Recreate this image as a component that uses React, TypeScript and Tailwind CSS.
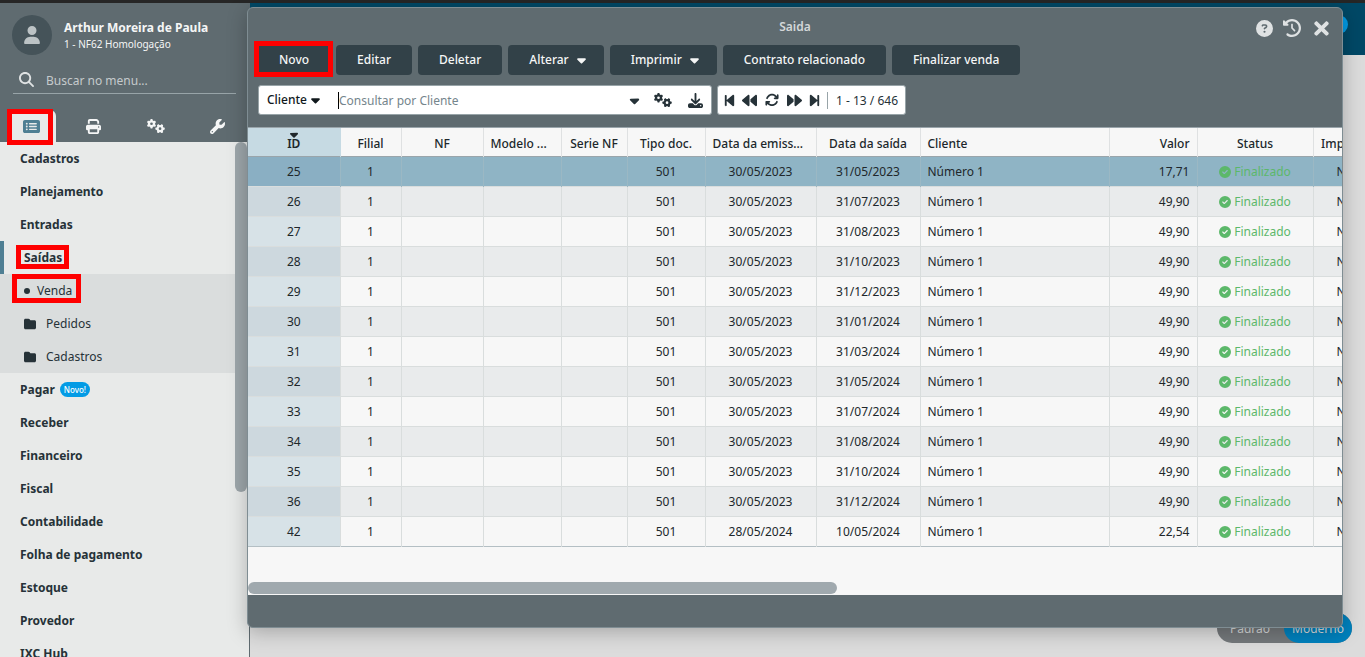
import React from "react";
import {
  FaArrowsRotate,
  FaBackward,
  FaBackwardStep,
  FaCaretDown,
  FaCircleCheck,
  FaCircleQuestion,
  FaClockRotateLeft,
  FaDownload,
  FaFolder,
  FaForward,
  FaForwardStep,
  FaGears,
  FaMagnifyingGlass,
  FaPrint,
  FaRectangleList,
  FaUser,
  FaWrench,
} from "react-icons/fa6";
import { FaTimes } from "react-icons/fa";

const menuBefore = ["Cadastros", "Planejamento", "Entradas"];
const menuAfter = [
  "Receber",
  "Financeiro",
  "Fiscal",
  "Contabilidade",
  "Folha de pagamento",
  "Estoque",
  "Provedor",
  "IXC Hub",
];

const columns = [
  { label: "ID", width: "w-[92px]", align: "text-center" },
  { label: "Filial", width: "w-[61px]", align: "text-center" },
  { label: "NF", width: "w-[82px]", align: "text-center" },
  { label: "Modelo ...", width: "w-[78px]", align: "text-left" },
  { label: "Serie NF", width: "w-[66px]", align: "text-center" },
  { label: "Tipo doc.", width: "w-[78px]", align: "text-center" },
  { label: "Data da emiss...", width: "w-[111px]", align: "text-left" },
  { label: "Data da saída", width: "w-[104px]", align: "text-center" },
  { label: "Cliente", width: "w-[189px]", align: "text-left" },
  { label: "Valor", width: "w-[88px]", align: "text-right" },
  { label: "Status", width: "w-[116px]", align: "text-center" },
  { label: "Impresso", width: "w-[70px]", align: "text-center" },
];

const rows = [
  { id: 25, issued: "30/05/2023", out: "31/05/2023", value: "17,71" },
  { id: 26, issued: "30/05/2023", out: "31/07/2023", value: "49,90" },
  { id: 27, issued: "30/05/2023", out: "31/08/2023", value: "49,90" },
  { id: 28, issued: "30/05/2023", out: "31/10/2023", value: "49,90" },
  { id: 29, issued: "30/05/2023", out: "31/12/2023", value: "49,90" },
  { id: 30, issued: "30/05/2023", out: "31/01/2024", value: "49,90" },
  { id: 31, issued: "30/05/2023", out: "31/03/2024", value: "49,90" },
  { id: 32, issued: "30/05/2023", out: "31/05/2024", value: "49,90" },
  { id: 33, issued: "30/05/2023", out: "31/07/2024", value: "49,90" },
  { id: 34, issued: "30/05/2023", out: "31/08/2024", value: "49,90" },
  { id: 35, issued: "30/05/2023", out: "31/10/2024", value: "49,90" },
  { id: 36, issued: "30/05/2023", out: "31/12/2024", value: "49,90" },
  { id: 42, issued: "28/05/2024", out: "10/05/2024", value: "22,54" },
];

function Highlight({ className }: { className: string }) {
  return <span aria-hidden="true" className={`pointer-events-none absolute z-10 border-5 border-[#ff0000] ${className}`} />;
}

function MenuItem({ children }: { children: React.ReactNode }) {
  return (
    <li>
      <a href="#" className="flex h-[33px] items-center gap-[5px] pl-5 font-bold">
        {children}
      </a>
    </li>
  );
}

function Sidebar() {
  return (
    <aside className="flex w-[250px] shrink-0 flex-col border-r border-[#5f6b70] bg-[#e8eae9]">
      <header className="bg-[#5f6b70] text-[#f5f6f6]">
        <div className="flex items-center gap-3 px-3 pt-3">
          <span className="flex size-10 items-center justify-center rounded-full bg-[#455359] text-[18px] text-[#bcc3c5]">
            <FaUser />
          </span>
          <div className="pt-0.5">
            <p className="text-[12px] leading-4 font-bold">Arthur Moreira de Paula</p>
            <p className="text-[10px] leading-4">1 - NF62 Homologação</p>
          </div>
        </div>
        <label className="mx-[13px] mt-3 flex h-[27px] items-center gap-3 border-b border-[#98a4a8] pt-0.5 pl-1.5">
          <FaMagnifyingGlass className="mb-1 shrink-0 text-[15px] text-[#dfe2e3]" />
          <input
            aria-label="Buscar no menu"
            placeholder="Buscar no menu..."
            className="w-full bg-transparent text-[12px] outline-none placeholder:text-[#c5cacc]"
          />
        </label>
        <nav className="mt-4 grid h-8 grid-cols-4 text-[15px]">
          <button aria-label="Menu" className="relative mr-1.5 ml-2 flex items-center justify-center rounded-t-md bg-[#e8eae9] text-[#4f7f93]">
            <FaRectangleList className="mr-0.5 text-[17px]" />
            <Highlight className="-top-px right-[3px] -bottom-[3px] -left-px" />
          </button>
          <button aria-label="Relatórios" className="flex items-center justify-center"><FaPrint /></button>
          <button aria-label="Configurações" className="flex items-center justify-center"><FaGears className="text-[18px]" /></button>
          <button aria-label="Ferramentas" className="flex items-center justify-center"><FaWrench /></button>
        </nav>
      </header>
      <div className="flex min-h-0 flex-1 overflow-hidden text-[12px] text-[#263238]">
        <ul className="w-[235px]">
          {menuBefore.map((item) => (
            <MenuItem key={item}>{item}</MenuItem>
          ))}
          <li>
            <a href="#" className="flex h-[33px] items-center border-l-4 border-[#4f7f93] pl-5 font-bold">
              <span className="relative">
                Saídas
                <Highlight className="-top-1 -right-[7px] -bottom-[2px] -left-2" />
              </span>
            </a>
            <ul className="bg-[#dadddd]">
              <li>
                <a href="#" className="flex h-[33px] items-center pl-6">
                  <span className="relative flex items-center gap-[7px]">
                    <span className="size-1.5 rounded-full bg-[#263238]" />
                    Venda
                    <Highlight className="-top-2 -right-[9px] -bottom-[3px] -left-3" />
                  </span>
                </a>
              </li>
              {["Pedidos", "Cadastros"].map((item) => (
                <li key={item}>
                  <a href="#" className="flex h-[33px] items-center gap-2.5 pl-6">
                    <FaFolder className="text-[12px]" />
                    {item}
                  </a>
                </li>
              ))}
            </ul>
          </li>
          <MenuItem>
            Pagar
            <span className="flex h-[15px] items-center rounded-full bg-[#039be5] px-1 text-[8px] font-medium text-white">Novo!</span>
          </MenuItem>
          {menuAfter.map((item) => (
            <MenuItem key={item}>{item}</MenuItem>
          ))}
        </ul>
        <div className="h-[350px] w-3 rounded-full bg-[#9da6aa]" />
      </div>
    </aside>
  );
}

function ToolButton({ children, menu, marked }: { children: React.ReactNode; menu?: boolean; marked?: boolean }) {
  return (
    <button
      className={`relative flex h-[30px] items-center gap-2 rounded bg-[#324148] pl-[21px] text-[12px] font-medium text-[#f5f6f6] ${
        menu ? "pr-[18px]" : "pr-[21px]"
      }`}
    >
      {children}
      {menu && <FaCaretDown className="w-[9px] text-[14px]" />}
      {marked && <Highlight className="-top-1 -right-[3px] -bottom-[2px] -left-1" />}
    </button>
  );
}

function Records() {
  return (
    <table className="w-[1135px] table-fixed border-collapse text-[12px] text-[#20272b]">
      <thead>
        <tr className="h-[28px] border-b border-[#9aa5ab] bg-[#f7f7f7]">
          {columns.map((c, i) => (
            <th
              key={c.label}
              className={`${c.width} ${c.align} relative border-r px-[7px] py-0 pt-1 font-medium whitespace-nowrap ${
                i === 0 ? "border-[#c6dae3] bg-[#c6dae3] font-semibold" : "border-[#dfe1e2]"
              }`}
            >
              {i === 0 && <FaCaretDown className="absolute top-0 left-1/2 -translate-x-1/2 text-[13px]" />}
              {c.label}
            </th>
          ))}
        </tr>
      </thead>
      <tbody>
        {rows.map((r, i) => {
          const selected = i === 0;
          const odd = i % 2 === 1;
          const last = i === rows.length - 1;
          const tone = selected ? "bg-[#8fb4c5]" : odd ? "bg-[#e9ebec]" : "bg-[#f7f7f7]";
          const idTone = selected ? "bg-[#8aafc3]" : odd ? "bg-[#cdd8de]" : "bg-[#d7e2e7]";
          const line = selected ? "border-[#9bb8c4]" : "border-[#d9dddd]";
          const cell = `border-r px-[7px] pt-0.5 pb-0 ${line}`;
          return (
            <tr key={r.id} className={`h-[30px] border-b ${tone} ${last ? "border-[#b4bfc4]" : "border-[#d9dddd]"}`}>
              <td className={`${cell} ${idTone} text-center`}>{r.id}</td>
              <td className={`${cell} text-center`}>1</td>
              <td className={cell} />
              <td className={cell} />
              <td className={cell} />
              <td className={`${cell} text-center`}>501</td>
              <td className={`${cell} text-center`}>{r.issued}</td>
              <td className={`${cell} text-center`}>{r.out}</td>
              <td className={cell}>Número 1</td>
              <td className={`${cell} text-right`}>{r.value}</td>
              <td className={`${cell} text-[#5cb86a]`}>
                <span className="flex items-center justify-center gap-[3px]">
                  <FaCircleCheck className="text-[12px]" />
                  Finalizado
                </span>
              </td>
              <td className={`${cell} text-center`}>Não</td>
            </tr>
          );
        })}
      </tbody>
    </table>
  );
}

function SaleWindow() {
  return (
    <section className="absolute top-[7px] right-[22px] bottom-[29px] left-[247px] flex flex-col overflow-hidden rounded-md border border-[#7f8d93] bg-[#5f6b70] shadow-[0_4px_20px_rgba(0,0,0,0.25)]">
      <header className="grid h-9 shrink-0 grid-cols-3 items-center px-2.5 text-[#dfe2e3]">
        <h1 className="col-start-2 pt-0.5 text-center text-[12px] font-semibold text-[#d3d7d9]">Saida</h1>
        <div className="flex items-center justify-end gap-2.5 pt-1">
          <button aria-label="Ajuda"><FaCircleQuestion className="text-[17px]" /></button>
          <button aria-label="Histórico"><FaClockRotateLeft className="text-[18px]" /></button>
          <button aria-label="Fechar"><FaTimes className="text-[21px]" /></button>
        </div>
      </header>
      <div className="flex shrink-0 gap-1.5 px-2.5 pt-px">
        <ToolButton marked>Novo</ToolButton>
        <ToolButton>Editar</ToolButton>
        <ToolButton>Deletar</ToolButton>
        <ToolButton menu>Alterar</ToolButton>
        <ToolButton menu>Imprimir</ToolButton>
        <ToolButton>Contrato relacionado</ToolButton>
        <ToolButton>Finalizar venda</ToolButton>
      </div>
      <div className="mt-2.5 mb-3 flex shrink-0 gap-[5px] px-2.5 text-[12px] text-[#263238]">
        <div className="flex h-[30px] w-[454px] items-center rounded-[3px] border border-[#98a4a8] bg-white pr-2 pl-2">
          <button className="flex items-center gap-1 font-medium text-[#10181c]">
            Cliente <FaCaretDown className="w-[9px] text-[14px]" />
          </button>
          <span className="ml-[18px] h-[17px] w-px bg-black" />
          <input
            aria-label="Consultar por Cliente"
            placeholder="Consultar por Cliente"
            className="min-w-0 flex-1 pt-px outline-none placeholder:text-[#75858c]"
          />
          <button aria-label="Abrir lista"><FaCaretDown className="text-[15px]" /></button>
          <button aria-label="Configurar filtro" className="ml-3"><FaGears className="text-[18px]" /></button>
          <button aria-label="Baixar" className="ml-4"><FaDownload className="text-[15px]" /></button>
        </div>
        <div className="flex h-[30px] items-center gap-2 rounded-[3px] border border-[#98a4a8] bg-white px-[7px] text-[15px]">
          <button aria-label="Primeira página" className="-mx-px"><FaBackwardStep className="w-[11px]" /></button>
          <button aria-label="Página anterior"><FaBackward /></button>
          <button aria-label="Atualizar"><FaArrowsRotate className="text-[14px]" /></button>
          <button aria-label="Próxima página"><FaForward /></button>
          <button aria-label="Última página" className="-mx-px"><FaForwardStep className="w-[11px]" /></button>
          <span className="h-[17px] w-px bg-[#98a4a8]" />
          <span className="pt-px text-[12px]">1 - 13 / 646</span>
        </div>
      </div>
      <div className="flex min-h-0 flex-1 flex-col overflow-hidden border-t border-[#9aa5ab] bg-[#f7f7f7]">
        <div className="flex-1 overflow-hidden">
          <Records />
        </div>
        <div className="mb-px h-3 w-[53.8%] shrink-0 rounded-full bg-[#a0a9ae]" />
      </div>
      <footer className="h-8 shrink-0" />
    </section>
  );
}

export default function App() {
  return (
    <div className="relative flex h-screen flex-col overflow-hidden bg-[#dcdcdc] font-['Noto_Sans',sans-serif]">
      <div className="h-[3px] shrink-0 bg-[#262626]" />
      <div className="flex min-h-0 flex-1">
        <Sidebar />
        <main className="flex min-w-0 flex-1 flex-col justify-between">
          <header className="flex h-[52px] justify-end bg-[#004866] pt-3 pr-[17px]">
            <span className="size-[19px] rounded-full bg-[#039be5]" />
          </header>
          <div className="mr-[13px] mb-3.5 flex h-[30px] self-end rounded-full bg-[#74787b] text-[12px] text-[#d5d7d8]">
            <button className="pt-0.5 pr-3.5 pl-[13px]">Padrão</button>
            <button className="rounded-full bg-[#0081bd] px-2 pt-0.5">Moderno</button>
          </div>
        </main>
      </div>
      <SaleWindow />
    </div>
  );
}
